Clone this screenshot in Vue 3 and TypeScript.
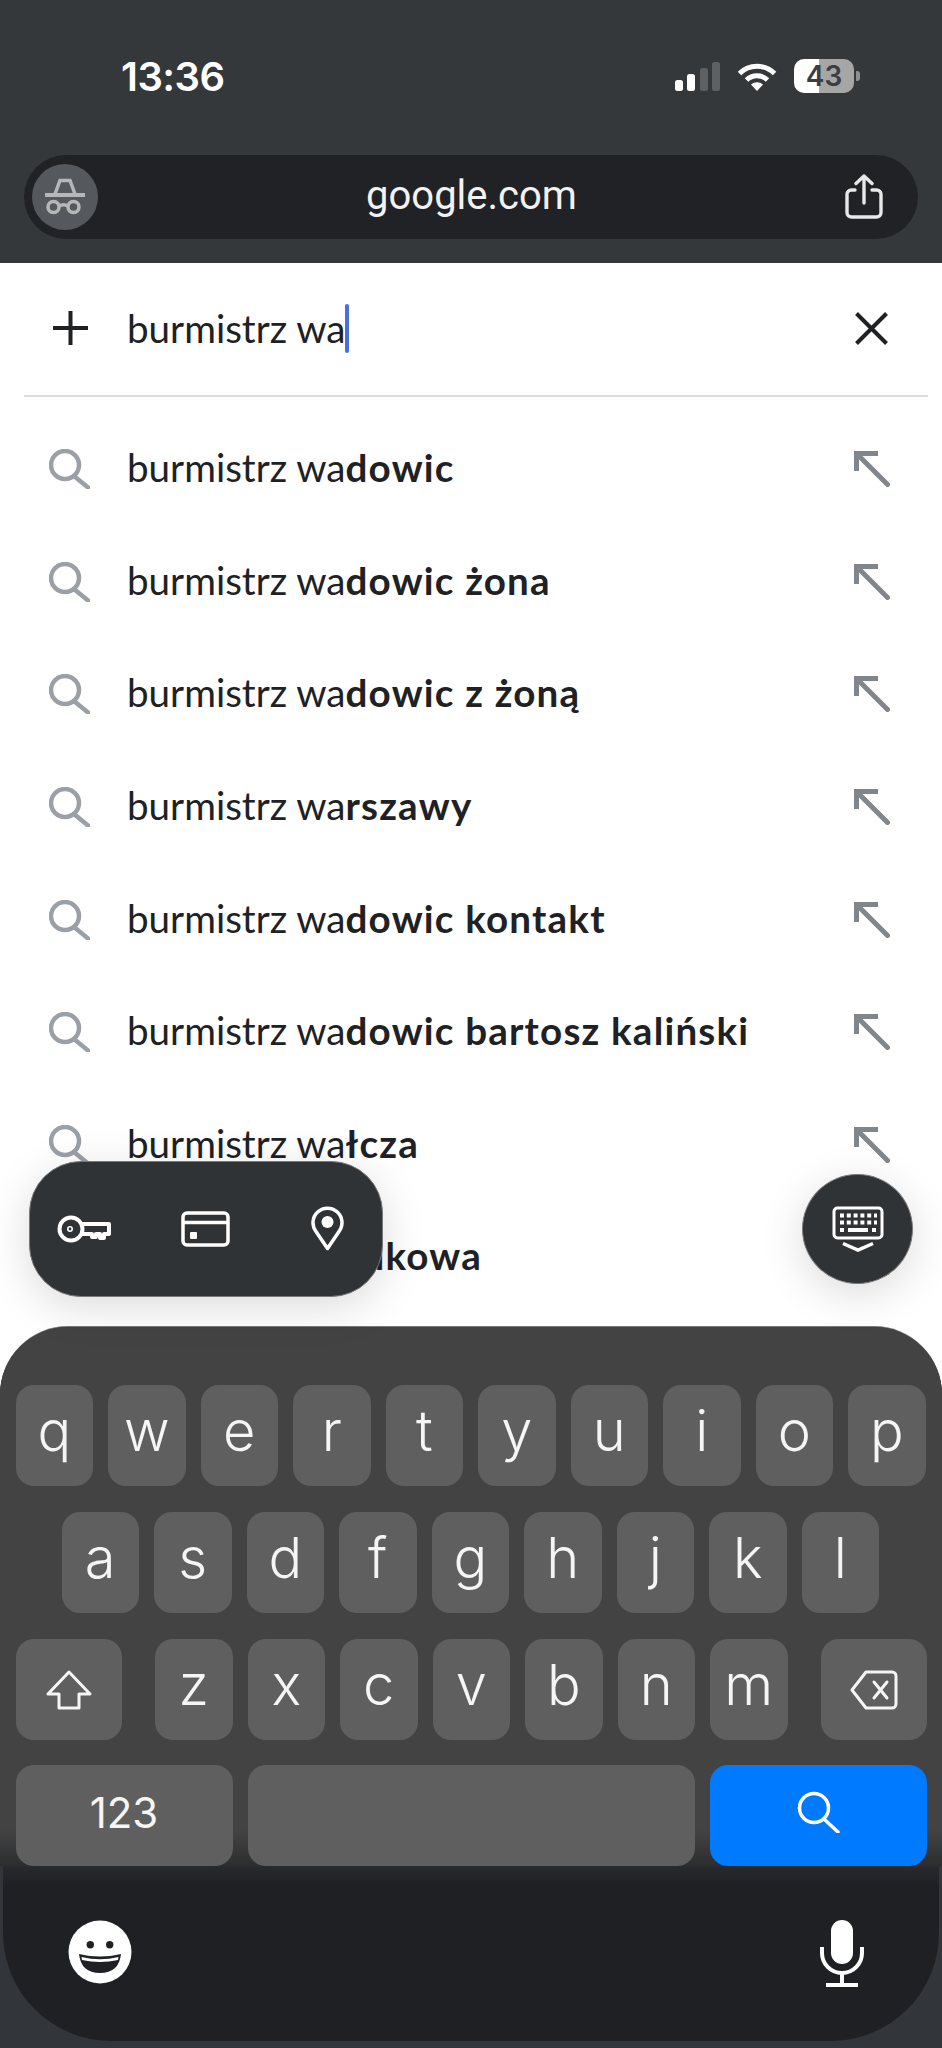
<script setup lang="ts">
const suggestions = [
  { typed: 'burmistrz wa', rest: 'dowic' },
  { typed: 'burmistrz wa', rest: 'dowic żona' },
  { typed: 'burmistrz wa', rest: 'dowic z żoną' },
  { typed: 'burmistrz wa', rest: 'rszawy' },
  { typed: 'burmistrz wa', rest: 'dowic kontakt' },
  { typed: 'burmistrz wa', rest: 'dowic bartosz kaliński' },
  { typed: 'burmistrz wa', rest: 'łcza' },
  { typed: 'burmistrz wa', rest: 'silkowa' },
]

const rowOne = ['q', 'w', 'e', 'r', 't', 'y', 'u', 'i', 'o', 'p']
const rowTwo = ['a', 's', 'd', 'f', 'g', 'h', 'j', 'k', 'l']
const rowThree = ['z', 'x', 'c', 'v', 'b', 'n', 'm']
</script>

<template>
  <div class="screen">
    <header class="top">
      <div class="status">
        <span class="status__time">13:36</span>
        <div class="status__icons">
          <div class="signal">
            <i class="signal__bar signal__bar--1" />
            <i class="signal__bar signal__bar--2" />
            <i class="signal__bar signal__bar--3" />
            <i class="signal__bar signal__bar--4" />
          </div>
          <svg class="wifi" width="40" height="29" viewBox="0 0 40 29" fill="none" stroke="#fff" stroke-width="5">
            <path d="M2.5 11.5A25 25 0 0 1 37.5 11.5" />
            <path d="M9.5 18A15 15 0 0 1 30.5 18" />
            <path d="M14 22.5A9 9 0 0 1 26 22.5L20 29Z" fill="#fff" stroke="none" />
          </svg>
          <div class="battery">43</div>
        </div>
      </div>
      <div class="urlbar">
        <div class="urlbar__badge">
          <svg width="66" height="66" viewBox="0 0 66 66" fill="none" stroke="#b6b7b9" stroke-width="3.5">
            <path d="M13 31H53" stroke-width="4" />
            <path d="M23 30L28 16.500H38L43 30" />
            <circle cx="21.500" cy="43" r="5.500" />
            <circle cx="41.500" cy="43" r="5.500" />
            <path d="M27 42C29.500 40.500 33.500 40.500 36 42" />
          </svg>
        </div>
        <span class="urlbar__host">google.com</span>
        <svg width="38" height="46" viewBox="0 0 38 46" fill="none" stroke="#e8e8e9" stroke-width="3.400" stroke-linecap="round" stroke-linejoin="round">
          <path d="M10 16H6.500A4.500 4.500 0 0 0 2 20.500V38.500A4.500 4.500 0 0 0 6.500 43H31.500A4.500 4.500 0 0 0 36 38.500V20.500A4.500 4.500 0 0 0 31.500 16H27" />
          <path d="M19 29V3M11 9.500L19 2L27 9.500" />
        </svg>
      </div>
    </header>

    <main class="results">
      <div class="query">
        <svg width="35" height="34" viewBox="0 0 35 34" stroke="#202124" stroke-width="4">
          <path d="M0 17H35M17.500 0V34" />
        </svg>
        <div class="query__text">burmistrz wa<i class="query__caret" /></div>
        <svg class="query__clear" width="33" height="33" viewBox="0 0 33 33" stroke="#202124" stroke-width="4">
          <path d="M1.500 1.500L31.500 31.500M31.500 1.500L1.500 31.500" />
        </svg>
      </div>
      <div class="divider" />
      <ul class="list">
        <li v-for="item in suggestions" :key="item.rest" class="list__row">
          <svg width="41" height="40" viewBox="0 0 41 40" fill="none" stroke="#9aa0a6" stroke-width="4.500">
            <circle cx="16" cy="16" r="14" />
            <path d="M25 27L39 38.500" stroke-linecap="round" />
          </svg>
          <span class="list__text">{{ item.typed }}<b>{{ item.rest }}</b></span>
          <svg class="list__fill" width="36" height="36" viewBox="0 0 36 36" fill="none" stroke="#80868b" stroke-width="5">
            <path d="M2.500 20V2.500H24" />
            <path d="M3 3L33.500 33.500" stroke-linecap="round" />
          </svg>
        </li>
      </ul>

      <div class="autofill">
        <svg width="54" height="28" viewBox="0 0 54 28" fill="none" stroke="#fff" stroke-width="4" stroke-linejoin="round">
          <circle cx="14" cy="14" r="11.500" />
          <circle cx="13" cy="14" r="2.200" stroke-width="1.600" />
          <path d="M25 9H52V19H47V23H43V19H39V22H35V19H25" />
        </svg>
        <svg class="autofill__card" width="49" height="36" viewBox="0 0 49 36" fill="none" stroke="#fff" stroke-width="3.500">
          <rect x="2" y="2" width="45" height="32" rx="4" />
          <path d="M2 11.500H47" />
          <rect x="9" y="21" width="7" height="7" rx="1" fill="#fff" stroke="none" />
        </svg>
        <svg class="autofill__pin" width="33" height="46" viewBox="0 0 33 46" fill="none" stroke="#fff" stroke-width="3.500" stroke-linejoin="round">
          <path d="M16.500 42.500L5 25.500A14.500 14.500 0 1 1 28 25.500Z" />
          <circle cx="16.500" cy="16" r="6" fill="#fff" stroke="none" />
        </svg>
      </div>

      <div class="hide-keyboard">
        <svg width="52" height="46" viewBox="0 0 52 46" fill="none" stroke="#fff">
          <rect x="2" y="2" width="48" height="30" rx="3.500" stroke-width="3" />
          <path d="M8 9.500H45M8 16.500H45" stroke-width="4" stroke-dasharray="4 2.800" />
          <path d="M8 24H12M16 24H36M40 24H44" stroke-width="4" />
          <path d="M11 37.500L26 44L41 37.500" stroke-width="3.500" />
        </svg>
      </div>
    </main>

    <section class="keyboard">
      <div class="keyboard__keys">
        <div class="keyboard__row">
          <div v-for="k in rowOne" :key="k" class="key">{{ k }}</div>
        </div>
        <div class="keyboard__row keyboard__row--inset">
          <div v-for="k in rowTwo" :key="k" class="key">{{ k }}</div>
        </div>
        <div class="keyboard__row keyboard__row--between">
          <div class="key key--action">
            <svg width="46" height="40" viewBox="0 0 46 40" fill="none" stroke="#f5f5f5" stroke-width="3" stroke-linejoin="round">
              <path d="M23 2L44 24H33V38H13V24H2Z" />
            </svg>
          </div>
          <div class="keyboard__letters">
            <div v-for="k in rowThree" :key="k" class="key">{{ k }}</div>
          </div>
          <div class="key key--action">
            <svg width="48" height="40" viewBox="0 0 48 40" fill="none" stroke="#f5f5f5" stroke-width="3" stroke-linejoin="round">
              <path d="M16 2H42A4 4 0 0 1 46 6V34A4 4 0 0 1 42 38H16L2 20Z" />
              <path d="M24 12L37 28M37 12L24 28" stroke-linecap="round" />
            </svg>
          </div>
        </div>
        <div class="keyboard__row keyboard__row--bottom">
          <div class="key key--num">123</div>
          <div class="key key--space" />
          <div class="key key--go">
            <svg width="43" height="42" viewBox="0 0 43 42" fill="none" stroke="#fff" stroke-width="3.500">
              <circle cx="17" cy="17" r="14.500" />
              <path d="M27 28L41 41" stroke-linecap="round" />
            </svg>
          </div>
        </div>
      </div>
      <div class="keyboard__bar">
        <svg width="64" height="64" viewBox="-32 -32 64 64">
          <circle r="31.500" fill="#fff" />
          <circle cx="-9.700" cy="-7.300" r="3.700" fill="#202124" />
          <circle cx="9.700" cy="-7.300" r="3.700" fill="#202124" />
          <path d="M-21 2Q0 7 21 2Q19 21 0 21Q-19 21-21 2Z" fill="#202124" />
          <path d="M-18.500 5Q0 9.500 18.500 5L18 8Q0 12-18 8Z" fill="#fff" />
        </svg>
        <svg width="44" height="67" viewBox="0 0 44 67" fill="none" stroke="#fff" stroke-width="4">
          <rect x="11" width="22" height="44" rx="11" fill="#fff" stroke="none" />
          <path d="M2 27V33A20 20 0 0 0 42 33V27" />
          <path d="M22 53V65M6 65H38" />
        </svg>
      </div>
    </section>
  </div>
</template>

<style scoped>
.screen {
  position: relative;
  display: flex;
  flex-direction: column;
  width: 942px;
  height: 2048px;
  overflow: hidden;
  background: #fff;
  color: #202124;
  font-family: Lato, 'Noto Sans', sans-serif;
}

.top {
  flex: none;
  display: flex;
  flex-direction: column;
  height: 263px;
  padding: 50px 24px 0;
  box-sizing: border-box;
  background: #35383b;
}

.status {
  display: flex;
  align-items: center;
  justify-content: space-between;
  height: 52px;
  padding: 0 64px 0 97px;
  color: #fff;
  font-family: Inter, sans-serif;
}

.status__time {
  font-size: 40px;
  font-weight: 600;
  letter-spacing: -0.5px;
}

.status__icons {
  display: flex;
  align-items: center;
}

.signal {
  display: flex;
  align-items: flex-end;
  gap: 4.500px;
  height: 29px;
  margin-right: 17px;
}

.signal__bar {
  display: block;
  width: 8px;
  border-radius: 2.500px;
  background: #fff;
}

.signal__bar--1 { height: 11px; }
.signal__bar--2 { height: 17px; }
.signal__bar--3 { height: 23px; background: #5e6164; }
.signal__bar--4 { height: 29px; background: #5e6164; }

.wifi {
  margin-right: 17px;
}

.battery {
  position: relative;
  width: 60px;
  height: 34px;
  border-radius: 10px;
  background: linear-gradient(to right, #fff 42%, #a6a6a6 42%);
  color: #3b3e42;
  font-size: 28px;
  font-weight: 600;
  line-height: 34px;
  text-align: center;
}

.battery::after {
  content: '';
  position: absolute;
  top: 12px;
  right: -6px;
  width: 4px;
  height: 10px;
  border-radius: 0 3px 3px 0;
  background: #8e8f91;
}

.urlbar {
  display: flex;
  align-items: center;
  justify-content: space-between;
  height: 84px;
  margin-top: 53px;
  padding: 0 35px 0 8px;
  border-radius: 42px;
  background: #212226;
}

.urlbar__badge {
  width: 66px;
  height: 66px;
  border-radius: 50%;
  background: #55585c;
}

.urlbar__host {
  padding-bottom: 3px;
  color: #f2f2f2;
  font-family: Roboto, sans-serif;
  font-size: 40px;
}

.results {
  position: relative;
  flex: 1;
  min-height: 0;
}

.query {
  display: flex;
  align-items: center;
  height: 132px;
  padding: 0 54px 2px 53px;
  box-sizing: border-box;
}

.query__text {
  display: flex;
  align-items: center;
  margin-left: 39px;
  font-size: 38.600px;
}

.query__caret {
  display: block;
  width: 4px;
  height: 49px;
  margin-left: -1px;
  border-radius: 2px;
  background: #4a6fdc;
}

.query__clear {
  margin-left: auto;
}

.divider {
  height: 2px;
  margin: 0 14px 0 24px;
  background: #dcdcdc;
}

.list {
  margin: 0;
  padding: 16px 0 0;
  list-style: none;
}

.list__row {
  display: flex;
  align-items: center;
  height: 112.600px;
  padding: 0 52px 0 49px;
}

.list__text {
  margin-left: 37px;
  padding-bottom: 4px;
  font-size: 38.600px;
  white-space: nowrap;
}

.list__text b {
  font-weight: 700;
  letter-spacing: 1.200px;
}

.list__fill {
  margin-left: auto;
}

.autofill {
  position: absolute;
  top: 898px;
  left: 29px;
  display: flex;
  align-items: center;
  gap: 70px;
  width: 354px;
  height: 136px;
  padding-left: 27px;
  box-sizing: border-box;
  border: 1px solid #77797c;
  border-radius: 52px;
  background: #303336;
  box-shadow: 0 10px 44px rgba(0, 0, 0, 0.14);
}

.autofill__pin {
  margin-left: 11px;
}

.hide-keyboard {
  position: absolute;
  top: 911px;
  left: 802px;
  display: flex;
  align-items: center;
  justify-content: center;
  width: 111px;
  height: 110px;
  box-sizing: border-box;
  border: 1px solid #77797c;
  border-radius: 50%;
  background: #303336;
  box-shadow: 0 10px 44px rgba(0, 0, 0, 0.14);
}

.keyboard {
  flex: none;
  display: flex;
  flex-direction: column;
  height: 721px;
  padding-bottom: 7px;
  box-sizing: border-box;
  overflow: hidden;
  border-radius: 68px 68px 0 0;
  background: #32353a;
  box-shadow: 0 -1px 0 #77797c;
}

.keyboard__keys {
  display: flex;
  flex-direction: column;
  gap: 26px;
  padding: 58px 15px 0 15.500px;
  background: linear-gradient(#434343 calc(100% - 36px), #2c2d2f);
}

.keyboard__row {
  display: flex;
  gap: 15px;
}

.keyboard__row--inset {
  padding: 0 46px;
}

.keyboard__row--between {
  justify-content: space-between;
}

.keyboard__row--bottom {
  margin-top: -1px;
}

.keyboard__letters {
  display: flex;
  gap: 15px;
}

.keyboard__row--bottom .key--space {
  flex: 1;
}

.key {
  display: flex;
  align-items: center;
  justify-content: center;
  flex: none;
  width: 77.500px;
  height: 101px;
  border-radius: 18px;
  background: #5f5f5f;
  color: #f5f5f5;
  font-family: Inter, sans-serif;
  font-size: 56px;
  font-weight: 300;
  line-height: 1;
  padding-bottom: 9px;
  box-sizing: border-box;
}

.key--action {
  width: 106px;
  padding-bottom: 0;
}

.key--num {
  width: 217px;
  font-size: 42px;
  font-weight: 400;
  padding-bottom: 5px;
}

.key--go {
  width: 217px;
  background: #007aff;
  padding-bottom: 7px;
}

.keyboard__bar {
  flex: 1;
  display: flex;
  align-items: flex-start;
  justify-content: space-between;
  margin: 0 3px;
  padding: 54px 75px 0 65px;
  border-radius: 0 0 108px 108px;
  background: linear-gradient(#292a2d, #1f2023 20px);
}
</style>
